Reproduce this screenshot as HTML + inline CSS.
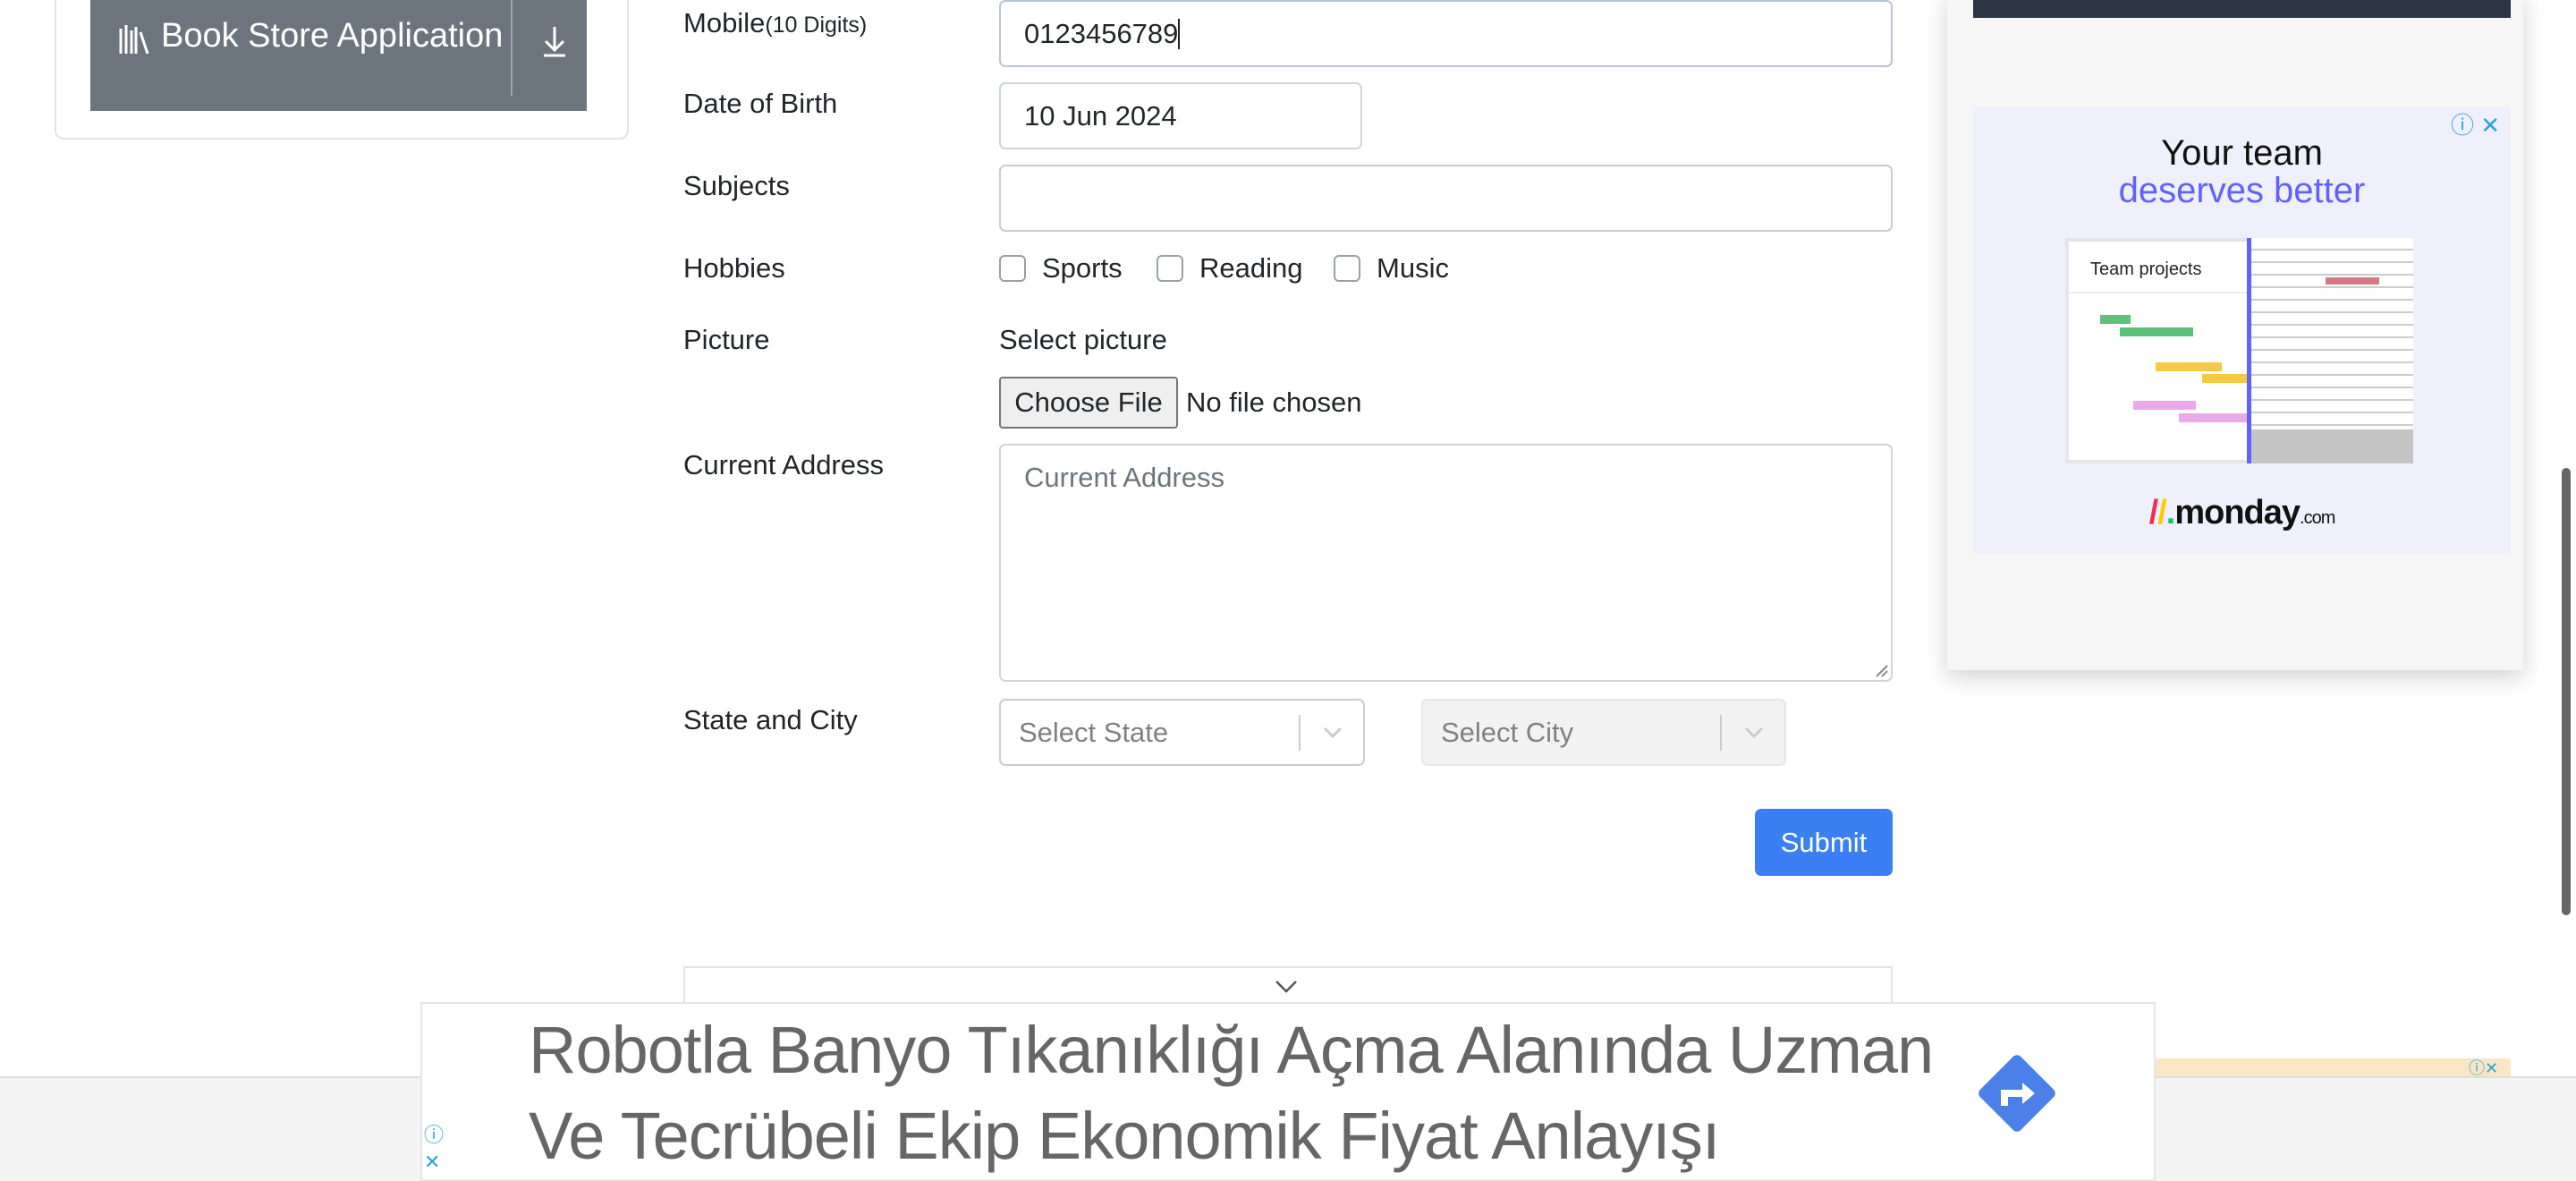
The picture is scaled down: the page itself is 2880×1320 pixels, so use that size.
<!DOCTYPE html>
<html><head><meta charset="utf-8"><style>
*{box-sizing:border-box;margin:0;padding:0}
body{width:2880px;height:1320px;overflow:hidden;background:#fff;font-family:"Liberation Sans",sans-serif;color:#212529;position:relative}
.a{position:absolute}
.lbl{position:absolute;left:764px;font-size:31px;line-height:40px}
.inp{position:absolute;border:2px solid #ced4da;border-radius:7px;background:#fff;font-size:31px;color:#495057;padding-left:26px;display:flex;align-items:center}
.cb{position:absolute;width:30px;height:30px;border:2px solid #9aa0a6;border-radius:6px;top:285px;background:#fff}
.ct{position:absolute;top:280px;font-size:31px;line-height:40px}
.sel{position:absolute;top:781px;height:75px;border:2px solid #ccc;border-radius:7px;font-size:31px;color:#808080;padding-left:20px;display:flex;align-items:center}
.sel .d{position:absolute;right:70px;top:16px;width:2px;height:40px;background:#ccc}
.sel svg{position:absolute;right:22px;top:26px}
</style></head><body>
<!-- left card -->
<div class="a" style="left:61px;top:-20px;width:642px;height:176px;border:2px solid #e3e3e3;border-radius:10px"></div>
<div class="a" style="left:101px;top:0;width:555px;height:124px;background:#6c757d"></div>
<div class="a" style="left:571px;top:0;width:2px;height:107px;background:#a0a6ab"></div>
<svg class="a" style="left:132px;top:26px" width="38" height="36" viewBox="0 0 38 36"><g stroke="#fff" stroke-width="3" fill="none"><path d="M3 6v28M9 2v32M15 8v26M20 4v30M25 10l8 24"/></g></svg>
<div class="a" style="left:180px;top:19px;font-size:38px;color:#fff">Book Store Application</div>
<svg class="a" style="left:604px;top:28px" width="32" height="36" viewBox="0 0 32 36"><g stroke="#fff" stroke-width="3" fill="none"><path d="M16 2v26M6 18l10 10 10-10M4 34h24"/></g></svg>

<!-- form -->
<div class="lbl" style="top:6px">Mobile<span style="font-size:25px">(10 Digits)</span></div>
<div class="inp" style="left:1117px;top:0;width:999px;height:75px;border-color:#b8c4da;color:#212529">0123456789<span style="display:inline-block;width:2px;height:34px;background:#222"></span></div>
<div class="lbl" style="top:96px">Date of Birth</div>
<div class="inp" style="left:1117px;top:92px;width:406px;height:75px;color:#212529">10 Jun 2024</div>
<div class="lbl" style="top:188px">Subjects</div>
<div class="inp" style="left:1117px;top:184px;width:999px;height:75px;border-color:#ccc"></div>
<div class="lbl" style="top:280px">Hobbies</div>
<div class="cb" style="left:1117px"></div><div class="ct" style="left:1165px">Sports</div>
<div class="cb" style="left:1293px"></div><div class="ct" style="left:1341px">Reading</div>
<div class="cb" style="left:1491px"></div><div class="ct" style="left:1539px">Music</div>
<div class="lbl" style="top:360px">Picture</div>
<div class="a" style="left:1117px;top:360px;font-size:31px;line-height:40px">Select picture</div>
<div class="a" style="left:1117px;top:421px;width:200px;height:58px;background:#efefef;border:2px solid #767676;border-radius:4px;font-size:31px;text-align:center;line-height:54px">Choose File</div>
<div class="a" style="left:1326px;top:430px;font-size:31px;line-height:40px">No file chosen</div>
<div class="lbl" style="top:500px">Current Address</div>
<div class="inp" style="left:1117px;top:496px;width:999px;height:266px;align-items:flex-start;padding-top:18px;color:#6c757d">Current Address</div>
<svg class="a" style="left:2096px;top:742px" width="16" height="16"><path d="M2 14L14 2M8 14L14 8" stroke="#888" stroke-width="2"/></svg>
<div class="lbl" style="top:785px">State and City</div>
<div class="sel" style="left:1117px;width:409px">Select State<div class="d"></div><svg width="24" height="20"><path d="M3 5l9 9 9-9" stroke="#ccc" stroke-width="3" fill="none"/></svg></div>
<div class="sel" style="left:1589px;width:408px;background:#f2f2f2;border-color:#e6e6e6">Select City<div class="d"></div><svg width="24" height="20"><path d="M3 5l9 9 9-9" stroke="#ccc" stroke-width="3" fill="none"/></svg></div>
<div class="a" style="left:1962px;top:904px;width:154px;height:75px;background:#3b7ff5;border-radius:7px;color:#fff;font-size:31px;text-align:center;line-height:75px">Submit</div>
<div class="a" style="left:764px;top:1080px;width:1352px;height:140px;border:2px solid #e3e3e3"></div>
<svg class="a" style="left:1424px;top:1094px" width="28" height="18"><path d="M3 3l11 11 11-11" stroke="#555" stroke-width="2.5" fill="none"/></svg>

<!-- sidebar -->
<div class="a" style="left:2177px;top:-10px;width:644px;height:759px;background:#f6f6f6;box-shadow:0 8px 24px rgba(0,0,0,.18)"></div>
<div class="a" style="left:2206px;top:0;width:601px;height:20px;background:#2b3544"></div>
<div class="a" style="left:2206px;top:119px;width:601px;height:500px;background:#eff0fb"></div>
<div class="a" style="left:2740px;top:120px;font-size:26px;color:#2aa3d6">ⓘ ✕</div>
<div class="a" style="left:2206px;top:148px;width:601px;text-align:center;font-size:40px;color:#111;line-height:46px">Your team</div>
<div class="a" style="left:2206px;top:190px;width:601px;text-align:center;font-size:40px;color:#6161ff;line-height:46px">deserves better</div>
<div class="a" style="left:2309px;top:266px;width:389px;height:252px;background:#fff;border:4px solid #e4e4ea"></div>
<div class="a" style="left:2313px;top:270px;width:200px;height:58px;border-bottom:2px solid #eee;font-size:20px;padding:20px 0 0 24px">Team projects</div>
<div class="a" style="left:2512px;top:266px;width:5px;height:252px;background:#6161ff"></div>
<div class="a" style="left:2517px;top:266px;width:181px;height:252px;background:repeating-linear-gradient(#fff 0 12px,#ccc 12px 14px)"></div>
<div class="a" style="left:2517px;top:480px;width:181px;height:38px;background:#c4c4c4"></div>
<div class="a" style="left:2600px;top:310px;width:60px;height:8px;background:#d47b85"></div>
<div class="a" style="left:2348px;top:352px;width:34px;height:10px;background:#5ac279"></div>
<div class="a" style="left:2370px;top:366px;width:82px;height:10px;background:#5ac279"></div>
<div class="a" style="left:2410px;top:405px;width:74px;height:10px;background:#f4ca45"></div>
<div class="a" style="left:2462px;top:418px;width:50px;height:10px;background:#f4ca45"></div>
<div class="a" style="left:2385px;top:448px;width:70px;height:10px;background:#eaa9e8"></div>
<div class="a" style="left:2436px;top:462px;width:76px;height:10px;background:#eaa9e8"></div>
<div class="a" style="left:2206px;top:552px;width:601px;text-align:center;font-size:38px;font-weight:bold;color:#111;letter-spacing:-1px"><span style="color:#f62b54">/</span><span style="color:#ffcc00">/</span><span style="color:#00ca72">.</span>monday<span style="font-size:20px;font-weight:normal">.com</span></div>
<div class="a" style="left:2864px;top:523px;width:10px;height:500px;background:#666;border-radius:5px"></div>

<!-- bottom -->
<div class="a" style="left:0;top:1203px;width:2880px;height:117px;background:#f4f4f4;border-top:2px solid #ddd"></div>
<div class="a" style="left:2410px;top:1183px;width:397px;height:20px;background:#f8e6c4"></div>
<div class="a" style="left:2760px;top:1180px;font-size:18px;color:#2aa3d6">ⓘ✕</div>
<div class="a" style="left:470px;top:1120px;width:1940px;height:200px;background:#fff;border:2px solid #e5e5e5"></div>
<div class="a" style="left:591px;top:1126px;font-size:74px;line-height:96px;color:#666;letter-spacing:-1px">Robotla Banyo Tıkanıklığı Açma Alanında Uzman<br>Ve Tecrübeli Ekip Ekonomik Fiyat Anlayışı</div>
<svg class="a" style="left:2205px;top:1172px" width="100" height="100" viewBox="0 0 100 100"><rect x="18" y="18" width="64" height="64" rx="6" transform="rotate(45 50 50)" fill="#4a80e8"/><path d="M36 64V50h24" stroke="#fff" stroke-width="8" fill="none"/><path d="M56 38l14 12-14 12z" fill="#fff"/></svg>
<div class="a" style="left:474px;top:1254px;font-size:22px;color:#2aa3d6;line-height:30px">ⓘ<br>✕</div>
</body></html>
